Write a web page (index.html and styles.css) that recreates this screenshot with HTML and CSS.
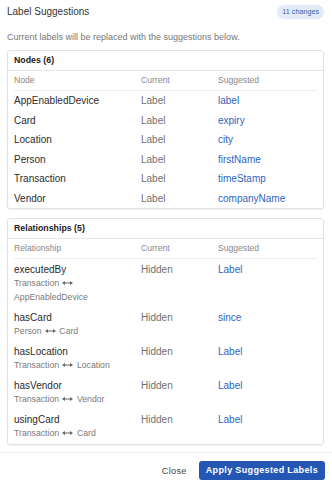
FILE: index.html
```html
<!DOCTYPE html>
<html lang="en">
<head>
    <meta charset="UTF-8">
    <meta name="viewport" content="width=device-width, initial-scale=1.0">
    <title>Label Suggestions</title>
    <link rel="stylesheet" href="styles.css">
</head>
<body>
    <div class="dialog">
        <header class="dialog-head">
            <h1>Label Suggestions</h1>
            <span class="badge">11 changes</span>
        </header>
        <p class="intro">Current labels will be replaced with the suggestions below.</p>

        <section class="card">
            <h2 class="card-title">Nodes (6)</h2>
            <div class="table">
                <div class="row row-head"><span>Node</span><span>Current</span><span>Suggested</span></div>
                <div class="row"><span class="name">AppEnabledDevice</span><span class="current">Label</span><span class="suggested">label</span></div>
                <div class="row"><span class="name">Card</span><span class="current">Label</span><span class="suggested">expiry</span></div>
                <div class="row"><span class="name">Location</span><span class="current">Label</span><span class="suggested">city</span></div>
                <div class="row"><span class="name">Person</span><span class="current">Label</span><span class="suggested">firstName</span></div>
                <div class="row"><span class="name">Transaction</span><span class="current">Label</span><span class="suggested">timeStamp</span></div>
                <div class="row"><span class="name">Vendor</span><span class="current">Label</span><span class="suggested">companyName</span></div>
            </div>
        </section>

        <section class="card">
            <h2 class="card-title">Relationships (5)</h2>
            <div class="table">
                <div class="row row-head"><span>Relationship</span><span>Current</span><span>Suggested</span></div>
                <div class="row rel">
                    <div><div class="name">executedBy</div><div class="ends">Transaction <svg class="arrow" width="11" height="6" viewBox="0 0 11 6"><path d="M2 3h7"/><path d="M0 3l3-2v4z M11 3l-3-2v4z" class="head"/></svg><br>AppEnabledDevice</div></div>
                    <span class="current">Hidden</span><span class="suggested">Label</span>
                </div>
                <div class="row rel">
                    <div><div class="name">hasCard</div><div class="ends">Person <svg class="arrow" width="11" height="6" viewBox="0 0 11 6"><path d="M2 3h7"/><path d="M0 3l3-2v4z M11 3l-3-2v4z" class="head"/></svg> Card</div></div>
                    <span class="current">Hidden</span><span class="suggested">since</span>
                </div>
                <div class="row rel">
                    <div><div class="name">hasLocation</div><div class="ends">Transaction <svg class="arrow" width="11" height="6" viewBox="0 0 11 6"><path d="M2 3h7"/><path d="M0 3l3-2v4z M11 3l-3-2v4z" class="head"/></svg> Location</div></div>
                    <span class="current">Hidden</span><span class="suggested">Label</span>
                </div>
                <div class="row rel">
                    <div><div class="name">hasVendor</div><div class="ends">Transaction <svg class="arrow" width="11" height="6" viewBox="0 0 11 6"><path d="M2 3h7"/><path d="M0 3l3-2v4z M11 3l-3-2v4z" class="head"/></svg> Vendor</div></div>
                    <span class="current">Hidden</span><span class="suggested">Label</span>
                </div>
                <div class="row rel">
                    <div><div class="name">usingCard</div><div class="ends">Transaction <svg class="arrow" width="11" height="6" viewBox="0 0 11 6"><path d="M2 3h7"/><path d="M0 3l3-2v4z M11 3l-3-2v4z" class="head"/></svg> Card</div></div>
                    <span class="current">Hidden</span><span class="suggested">Label</span>
                </div>
            </div>
        </section>

        <footer class="actions">
            <button class="btn-close">Close</button>
            <button class="btn-apply">Apply Suggested Labels</button>
        </footer>
    </div>
</body>
</html>
```

FILE: styles.css
```css
* {
    margin: 0;
    padding: 0;
    box-sizing: border-box;
}

body {
    font-family: 'Liberation Sans', Arial, sans-serif;
    background-color: #fff;
    color: #2b2b2b;
}

.dialog {
    width: 332px;
    height: 482px;
    overflow: hidden;
}

.dialog-head {
    display: flex;
    align-items: center;
    justify-content: space-between;
    padding: 5px 8px 0 7px;
    height: 19px;
}

.dialog-head h1 {
    font-size: 10px;
    font-weight: normal;
    color: #333;
    line-height: 14px;
}

.badge {
    background-color: #e3ebf7;
    color: #3a5fa6;
    font-size: 7.2px;
    line-height: 14px;
    padding: 0 5px;
    border-radius: 7px;
}

.intro {
    margin: 12px 7px 0;
    font-size: 9px;
    line-height: 12px;
    color: #777;
}

.card {
    margin: 7px 8px 0 7px;
    border: 1px solid #e2e2e2;
    border-radius: 3px;
    box-shadow: 0 1px 2px rgba(0, 0, 0, 0.06);
}

.card + .card {
    margin-top: 9px;
}

.card-title {
    font-size: 8.8px;
    font-weight: bold;
    color: #222;
    line-height: 19px;
    padding: 0 6px;
    border-bottom: 1px solid #e6e6e6;
}

.table {
    padding: 0 6px;
}

.row {
    display: grid;
    grid-template-columns: 127px 77px 1fr;
    font-size: 10px;
    line-height: 13.5px;
    padding: 3px 0;
}

.row-head {
    font-size: 8.6px;
    color: #888;
    line-height: 19px;
    padding: 0;
    border-bottom: 1px solid #ececec;
}

.name {
    color: #2b2b2b;
}

.current {
    color: #707070;
}

.suggested {
    color: #2e63bf;
}

.rel {
    padding: 3.5px 0 3px;
    line-height: 13px;
}

.ends {
    font-size: 8.7px;
    line-height: 14.6px;
    color: #7a7a7a;
}

.arrow {
    vertical-align: 0;
    margin: 0 1px;
}

.arrow path {
    stroke: #666;
    stroke-width: 1;
    fill: none;
}

.arrow path.head {
    fill: #666;
    stroke: none;
}

.actions {
    margin-top: 7px;
    border-top: 1px solid #ececec;
    display: flex;
    justify-content: flex-end;
    align-items: center;
    gap: 12px;
    padding: 8px 7px 0;
}

.actions button {
    font-family: inherit;
    border: none;
    cursor: pointer;
}

.btn-close {
    background: none;
    color: #444;
    font-size: 9.2px;
    letter-spacing: 0.3px;
}

.btn-apply {
    background-color: #2457b3;
    color: #fff;
    font-size: 9px;
    font-weight: bold;
    letter-spacing: 0.35px;
    line-height: 19px;
    padding: 0 7px;
    border-radius: 3px;
}
```
